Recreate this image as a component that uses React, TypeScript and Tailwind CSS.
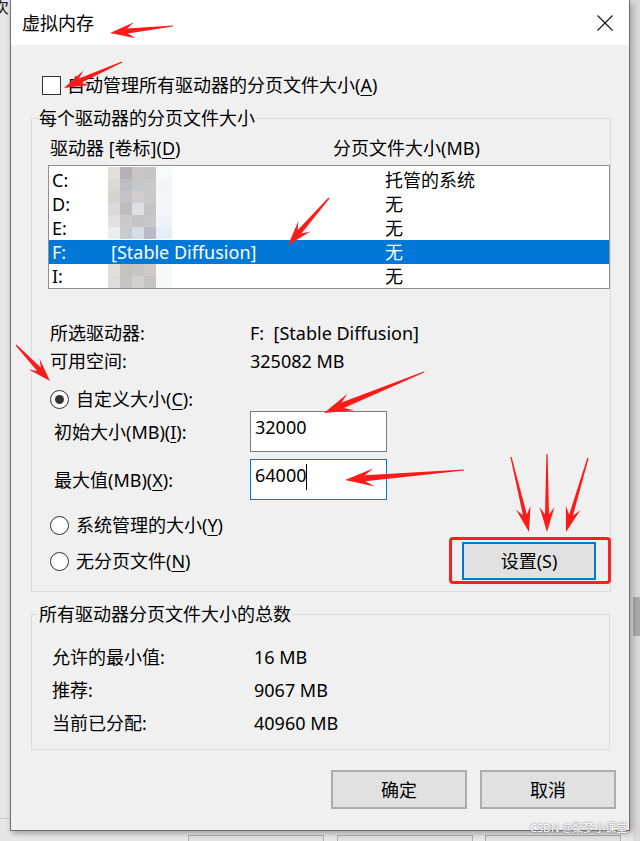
import React from "react";

type Arrow = { t: [number, number]; p: [number, number]; h: number; w: number; s: number };

const arrows: Arrow[] = [
  { t: [173, 26], p: [110, 33], h: 25, w: 16, s: 5 },
  { t: [122, 62], p: [64, 88], h: 25, w: 16, s: 5 },
  { t: [329, 198], p: [288, 245], h: 25, w: 16, s: 5 },
  { t: [16, 345], p: [50, 381], h: 23, w: 15, s: 5 },
  { t: [424, 372], p: [324, 413], h: 29, w: 18, s: 6 },
  { t: [464, 470], p: [345, 480], h: 29, w: 18, s: 6 },
  { t: [511, 457], p: [529, 532], h: 25, w: 15, s: 4 },
  { t: [547, 454], p: [547, 532], h: 25, w: 15, s: 4 },
  { t: [588, 458], p: [566, 532], h: 25, w: 15, s: 4 },
];

function arrowPoints(a: Arrow) {
  const [tx, ty] = a.t;
  const [px, py] = a.p;
  const len = Math.hypot(px - tx, py - ty);
  const ux = (px - tx) / len;
  const uy = (py - ty) / len;
  const nx = -uy;
  const ny = ux;
  const bx = px - ux * a.h;
  const by = py - uy * a.h;
  const kx = bx + ux * a.h * 0.3;
  const ky = by + uy * a.h * 0.3;
  const list = [
    [tx + nx * 0.6, ty + ny * 0.6],
    [kx + (nx * a.s) / 2, ky + (ny * a.s) / 2],
    [bx + (nx * a.w) / 2, by + (ny * a.w) / 2],
    [px, py],
    [bx - (nx * a.w) / 2, by - (ny * a.w) / 2],
    [kx - (nx * a.s) / 2, ky - (ny * a.s) / 2],
    [tx - nx * 0.6, ty - ny * 0.6],
  ];
  return list.map(([x, y]) => `${x.toFixed(1)},${y.toFixed(1)}`).join(" ");
}

const mosaicTop = [
  ["#e2dfdd", "#b3b2b6", "#c9c6c6", "#c8c3c4", "#f7f9fb"],
  ["#dcd8d6", "#bebdbf", "#c7c8cb", "#cdc8c8", "#f3f6f9"],
  ["#d6d2d0", "#c3c2c4", "#cfcdcd", "#cdc9c9", "#f4f7fa"],
  ["#dcdad8", "#bdbcbe", "#dfdee0", "#c7c3c4", "#f5f8fb"],
  ["#e3e1e1", "#cbcaca", "#c3c3c5", "#cac7c9", "#eef3f8"],
  ["#ebedef", "#c7ccd2", "#d4dce4", "#b9bcc6", "#e6eef7"],
];

const mosaicBottom = [
  ["#e3dfdd", "#c4c3c3", "#c8c5c5", "#cdcaca", "#f6f8fa"],
  ["#e0dcdb", "#c6c4c4", "#d3d1d0", "#c7c4c3", "#f6f8fa"],
];

const drives = [
  { d: "C:", label: "", size: "托管的系统" },
  { d: "D:", label: "", size: "无" },
  { d: "E:", label: "", size: "无" },
  { d: "F:", label: "[Stable Diffusion]", size: "无", selected: true },
  { d: "I:", label: "", size: "无" },
];

function Mosaic({ rows }: { rows: string[][] }) {
  return (
    <div className="flex flex-col">
      {rows.map((r, i) => (
        <div key={i} className="flex">
          {r.map((c, j) => (
            <div
              key={j}
              className={j === 4 ? "w-[16px] h-[12px]" : "w-[12px] h-[12px]"}
              style={{ backgroundColor: c }}
            />
          ))}
        </div>
      ))}
    </div>
  );
}

function Radio({ checked }: { checked?: boolean }) {
  return (
    <div className="w-[19px] h-[19px] rounded-full border border-[#333] bg-white flex items-center justify-center shrink-0">
      {checked && <div className="w-[9px] h-[9px] rounded-full bg-[#333]" />}
    </div>
  );
}

function U({ children }: { children: React.ReactNode }) {
  return <span className="underline underline-offset-[3px] decoration-1">{children}</span>;
}

function App() {
  return (
    <div className="relative w-[640px] h-[841px] bg-[#e6e6e6] overflow-hidden font-['Noto_Sans','Noto_Sans_CJK_SC',sans-serif] text-[18px] leading-[24px] text-black">
      {/* desktop behind the dialog */}
      <div className="absolute left-0 top-0 w-[10px] h-[16px] overflow-hidden">
        <span className="block -ml-[7px] -mt-[5px] text-[16px] text-[#222]">次</span>
      </div>
      <div className="absolute left-0 top-[818px] w-[10px] h-px bg-[#c8c8c8]" />
      <div className="absolute left-[633px] top-0 w-[7px] h-[841px] bg-[#d9d9d9]" />
      <div className="absolute left-[633px] top-[597px] w-[7px] h-[39px] bg-[#a9a9a9]" />
      <div className="absolute left-[188px] top-[835px] w-[136px] h-[20px] border border-[#adadad] bg-[#e1e1e1]" />
      <div className="absolute left-[337px] top-[835px] w-[136px] h-[20px] border border-[#adadad] bg-[#e1e1e1]" />
      <div className="absolute left-[485px] top-[835px] w-[136px] h-[20px] border border-[#adadad] bg-[#e1e1e1]" />

      {/* dialog window */}
      <div className="absolute left-[10px] top-0 w-[620px] h-[831px] border-x border-b border-[#6f6f6f] bg-[#f0f0f0] flex flex-col shadow-[2px_2px_6px_rgba(0,0,0,0.35)]">
        <div className="h-[45px] bg-white flex items-center justify-between pl-[11px] pr-[16px] shrink-0">
          <span>虚拟内存</span>
          <svg width="16" height="16" viewBox="0 0 16 16">
            <path d="M0.5 0.5 L15.5 15.5 M15.5 0.5 L0.5 15.5" stroke="#111" strokeWidth="1.1" />
          </svg>
        </div>

        <div className="flex items-center h-[24px] mt-[28px] pl-[31px]">
          <div className="w-[19px] h-[19px] border border-[#333] bg-white shrink-0" />
          <span className="ml-[6px]">
            自动管理所有驱动器的分页文件大小(<U>A</U>)
          </span>
        </div>

        <fieldset className="mt-[9px] ml-[20px] w-[579px] border border-[#dcdcdc] pb-[11px]">
          <legend className="ml-[6px] px-[1px]">每个驱动器的分页文件大小</legend>
          <div className="flex h-[24px] mt-[6px] pl-[18px]">
            <span className="w-[283px]">
              驱动器 [卷标](<U>D</U>)
            </span>
            <span>分页文件大小(MB)</span>
          </div>
          <div className="relative mt-[5px] ml-[16px] w-[562px] h-[124px] border border-[#8f8f8f] bg-white pt-[2px]">
            {drives.map((r) => (
              <div
                key={r.d}
                className={
                  "flex h-[24px] items-center pl-[3px] " +
                  (r.selected ? "bg-[#0078d7] text-white" : "")
                }
              >
                <span className="w-[59px]">{r.d}</span>
                <span className="w-[274px]">{r.label}</span>
                <span>{r.size}</span>
              </div>
            ))}
            <div className="absolute left-[59px] top-[1px]">
              <Mosaic rows={mosaicTop} />
            </div>
            <div className="absolute left-[59px] top-[98px]">
              <Mosaic rows={mosaicBottom} />
            </div>
          </div>

          <div className="flex h-[28px] items-center mt-[30px] pl-[18px]">
            <span className="w-[200px]">所选驱动器:</span>
            <span>F:&nbsp; [Stable Diffusion]</span>
          </div>
          <div className="flex h-[28px] items-center pl-[18px]">
            <span className="w-[200px]">可用空间:</span>
            <span>325082 MB</span>
          </div>

          <div className="flex h-[24px] items-center mt-[12px] pl-[18px]">
            <Radio checked />
            <span className="ml-[7px]">
              自定义大小(<U>C</U>):
            </span>
          </div>
          <div className="flex h-[41px] items-center pl-[22px]">
            <span className="w-[196px]">
              初始大小(MB)(<U>I</U>):
            </span>
            <div className="w-[137px] h-[41px] border border-[#7a7a7a] bg-white pl-[4px] pt-[3px]">32000</div>
          </div>
          <div className="flex h-[41px] items-center mt-[7px] pl-[22px]">
            <span className="w-[196px]">
              最大值(MB)(<U>X</U>):
            </span>
            <div className="w-[137px] h-[41px] border border-[#0078d7] bg-white pl-[4px] pt-[3px] flex items-start">
              <span>64000</span>
              <span className="w-px h-[26px] bg-black mt-[1px]" />
            </div>
          </div>

          <div className="flex h-[24px] items-center mt-[13px] pl-[18px]">
            <Radio />
            <span className="ml-[7px]">
              系统管理的大小(<U>Y</U>)
            </span>
          </div>
          <div className="flex h-[38px] items-center justify-between mt-[5px] pl-[18px] pr-[14px]">
            <div className="flex items-center">
              <Radio />
              <span className="ml-[7px]">
                无分页文件(<U>N</U>)
              </span>
            </div>
            <div className="w-[134px] h-[38px] border-2 border-[#0078d7] bg-[#e1e1e1] flex items-center justify-center">
              设置(S)
            </div>
          </div>
        </fieldset>

        <fieldset className="mt-[10px] ml-[20px] w-[579px] border border-[#dcdcdc] pb-[10px]">
          <legend className="ml-[6px] px-[1px]">所有驱动器分页文件大小的总数</legend>
          <div className="mt-[14px]">
            {[
              ["允许的最小值:", "16 MB"],
              ["推荐:", "9067 MB"],
              ["当前已分配:", "40960 MB"],
            ].map(([k, v]) => (
              <div key={k} className="flex h-[33px] items-center pl-[20px]">
                <span className="w-[202px]">{k}</span>
                <span>{v}</span>
              </div>
            ))}
          </div>
        </fieldset>

        <div className="flex justify-end gap-[13px] pr-[13px] mt-[20px]">
          <div className="w-[136px] h-[39px] border-2 border-[#adadad] bg-[#e1e1e1] flex items-center justify-center">确定</div>
          <div className="w-[136px] h-[39px] border-2 border-[#adadad] bg-[#e1e1e1] flex items-center justify-center">取消</div>
        </div>
      </div>

      {/* annotations */}
      <div className="absolute left-[449px] top-[537px] w-[162px] h-[47px] border-[3px] border-[#ff1f1f] rounded-[4px]" />
      <svg className="absolute left-0 top-0 pointer-events-none" width="640" height="841">
        {arrows.map((a, i) => (
          <polygon key={i} points={arrowPoints(a)} fill="#ff1a1a" />
        ))}
      </svg>
      <div className="absolute left-[530px] top-[821px] text-[11px] leading-[14px] whitespace-nowrap text-white [text-shadow:0_0_2px_#555]">
        CSDN @聚梦小课堂
      </div>
    </div>
  );
}

export default App;
